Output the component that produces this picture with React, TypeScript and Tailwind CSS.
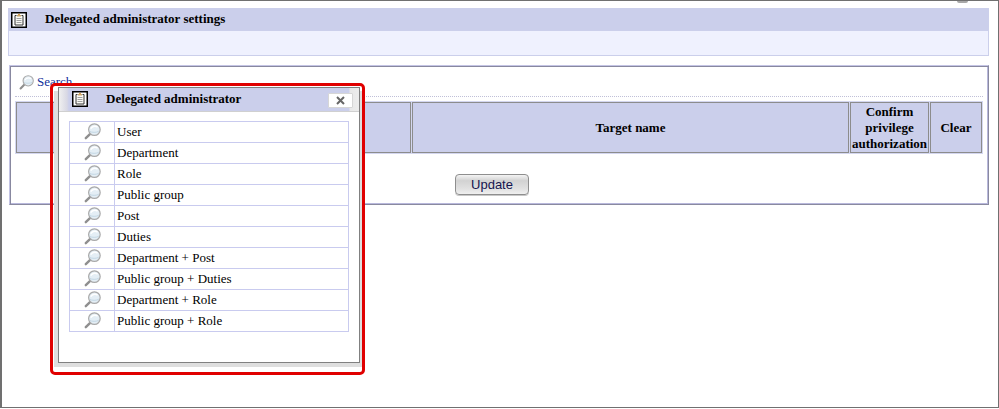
import React from 'react';

const serif = "font-['Liberation_Serif','Times_New_Roman',serif]";

const rows = [
  'User',
  'Department',
  'Role',
  'Public group',
  'Post',
  'Duties',
  'Department + Post',
  'Public group + Duties',
  'Department + Role',
  'Public group + Role',
];

function ClipboardIcon() {
  return (
    <svg width="16" height="16" viewBox="0 0 16 16" className="shrink-0 block">
      <rect x="0.75" y="0.75" width="14.5" height="14.5" fill="#fff" stroke="#000" strokeWidth="1.5" />
      <path d="M5.5 3.5h-1.5v9.5h8v-9.5h-1.5" fill="#fbfbf6" stroke="#333" strokeWidth="1" />
      <rect x="6" y="3" width="4" height="1.5" fill="#c9a56a" />
      <rect x="7" y="2" width="2" height="1" fill="#e0a050" />
      <path d="M5.5 6.5h5M5.5 8.5h5M5.5 10.5h5" stroke="#a0a0a0" strokeWidth="1" />
    </svg>
  );
}

function MagnifierIcon({ size = 17 }: { size?: number }) {
  return (
    <svg width={size} height={size} viewBox="0 0 17 17" className="block">
      <path d="M1.8 15.2 6.2 10.8" stroke="#8f8f8f" strokeWidth="2.4" strokeLinecap="round" />
      <circle cx="10.4" cy="6.6" r="5.8" fill="#e4eef5" stroke="#a9a9a9" strokeWidth="1.2" />
      <path d="M6.8 5.8C7.6 3.6 11 2.4 13.6 4.2" fill="none" stroke="#fff" strokeWidth="1.4" />
      <path d="M5.8 8.4c1.6 1.2 7 1.4 9-.2" fill="none" stroke="#c3d7e4" strokeWidth="1" />
    </svg>
  );
}

function Dialog() {
  return (
    <div className="absolute left-[56px] top-[86px] w-[302px] h-[276px] bg-white border border-[#808080] shadow-[0_4px_0_#dedede,4px_4px_0_#dedede,-4px_4px_0_#dedede]">
      <div className="h-[24px] flex items-center border-b border-[#d0d0d0] bg-[linear-gradient(90deg,#f0f0f0_0px,#d8d8e4_8px,#cbcfeb_10px,#cbcfeb_290px,#e8e8e8_291px,#ececec_100%)]">
        <div className="ml-[13px] mt-[-1px]">
          <ClipboardIcon />
        </div>
        <span className="ml-[18px] mt-[-2px] text-[13px] font-bold text-black leading-none">Delegated administrator</span>
        <button
          type="button"
          className="ml-auto mr-[6px] mt-[2px] w-[25px] h-[15px] flex items-center justify-center bg-white border border-[#d6d6d6] rounded-[1px]"
        >
          <svg width="9" height="9" viewBox="0 0 9 9">
            <path d="M1 1l7 7M8 1l-7 7" stroke="#666" strokeWidth="2" />
          </svg>
        </button>
      </div>
      <table className="mt-[9px] ml-[10px] w-[280px] border-collapse text-[13px] text-black">
        <tbody>
          {rows.map((r) => (
            <tr key={r} className="h-[21px]">
              <td className="w-[45px] p-0 border border-[#c9cbef]">
                <div className="flex justify-center pb-[2px]">
                  <MagnifierIcon />
                </div>
              </td>
              <td className="p-0 pl-[2px] pb-[2px] border border-[#c9cbef] leading-none">{r}</td>
            </tr>
          ))}
        </tbody>
      </table>
    </div>
  );
}

export default function App() {
  return (
    <div className={`relative w-[999px] h-[408px] overflow-hidden bg-white border border-l-2 border-[#707070] pl-[6px] pt-[7px] ${serif}`}>
      <div className="w-[981px]">
        <div className="h-[23px] flex items-center bg-[#cbcfeb]">
          <div className="ml-[3px]">
            <ClipboardIcon />
          </div>
          <span className="ml-[18px] mt-[-2px] text-[13px] font-bold text-black leading-none">Delegated administrator settings</span>
        </div>
        <div className="h-[25px] bg-[#eff1fe] border border-t-0 border-[#cbcfeb]" />
      </div>

      <div className="mt-[9px] ml-[1px] w-[980px] h-[140px] border border-t-[#c4c4e4] border-l-[#c4c4e4] border-r-[#8a8aa0] border-b-[#8a8aa0] shadow-[inset_1px_1px_0_#8888a0,inset_-1px_-1px_0_#b8b8dc] pl-[5px] pr-[5px] pt-[8px]">
        <div className="h-[23px] flex items-start gap-[3px] pl-[4px] pt-[1px] border-b border-dotted border-[#c0c0d8]">
          <MagnifierIcon size={15} />
          <span className="text-[13px] text-[#12309a] leading-none">Search</span>
        </div>
        <div className="mt-[4px] w-[968px] h-[53px] p-px bg-[#d4d7f0] grid grid-cols-[395px_437px_79px_52px] gap-px text-[13px] font-bold text-black text-center leading-[16px]">
          <div className="border border-[#8c8c8c] bg-[#cbcfeb]" />
          <div className="border border-[#8c8c8c] bg-[#cbcfeb] flex items-center justify-center">Target name</div>
          <div className="border border-[#8c8c8c] bg-[#cbcfeb] flex items-center justify-center">
            Confirm
            <br />
            privilege
            <br />
            authorization
          </div>
          <div className="border border-[#8c8c8c] bg-[#cbcfeb] flex items-center justify-center">Clear</div>
        </div>
        <div className="mt-[20px] flex justify-center pr-[14px]">
          <button
            type="button"
            className="w-[74px] h-[21px] rounded-[4px] border border-[#8e8e8e] bg-[linear-gradient(180deg,#f4f4f4_0%,#d2d2d2_30%,#e0e0e0_70%,#efefef_100%)] shadow-[0_1px_0_#c8c8c8] text-[13px] font-['Liberation_Sans',Arial,sans-serif] text-[#141450] leading-none"
          >
            Update
          </button>
        </div>
      </div>

      <Dialog />

      {/* red annotation round the dialog */}
      <div className="absolute left-[48px] top-[82px] w-[315px] h-[292px] border-[3px] border-[#e00000] rounded-[5px] pointer-events-none" />
      <div className="absolute left-[955px] top-0 w-[11px] h-[2px] bg-[#a8a8a8] rounded-b-full" />
    </div>
  );
}
